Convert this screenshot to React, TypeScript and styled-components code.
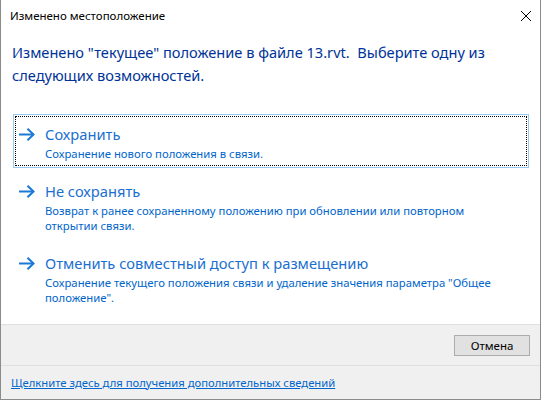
import React from "react";
import styled, { createGlobalStyle } from "styled-components";

const GlobalStyle = createGlobalStyle`
  html, body {
    margin: 0;
    padding: 0;
    background: #ffffff;
  }
  body {
    font-family: "Noto Sans", "Liberation Sans", sans-serif;
  }
`;

interface LinkOption {
  title: string;
  description: string;
  focused?: boolean;
}

const options: LinkOption[] = [
  {
    title: "Сохранить",
    description: "Сохранение нового положения в связи.",
    focused: true,
  },
  {
    title: "Не сохранять",
    description:
      "Возврат к ранее сохраненному положению при обновлении или повторном открытии связи.",
  },
  {
    title: "Отменить совместный доступ к размещению",
    description:
      'Сохранение текущего положения связи и удаление значения параметра "Общее положение".',
  },
];

const DialogWindow = styled.div`
  width: 541px;
  height: 400px;
  box-sizing: border-box;
  border: 1px solid #8c8c8c;
  border-top: none;
  display: flex;
  flex-direction: column;
  background: #ffffff;
  font-family: "Noto Sans", "Liberation Sans", sans-serif;
`;

const TitleBar = styled.div`
  height: 31px;
  flex: 0 0 auto;
  display: flex;
  align-items: center;
  justify-content: space-between;
  padding: 0 9px 1px 9px;
  font-size: 11.5px;
  color: #000000;
`;

const CloseButton = styled.div`
  width: 10px;
  height: 10px;
  color: #000000;
  display: flex;
`;

const Content = styled.div`
  flex: 1 1 auto;
  padding: 9px 10px 0 11px;
  display: flex;
  flex-direction: column;
`;

const MainInstruction = styled.div`
  font-size: 14.6px;
  line-height: 23px;
  color: #003399;
  margin-bottom: 27px;
`;

const LinkList = styled.div`
  display: flex;
  flex-direction: column;
  gap: 3px;
`;

const CommandLink = styled.div<{ $focused?: boolean }>`
  display: flex;
  align-items: flex-start;
  box-sizing: border-box;
  border: 1px solid ${(p) => (p.$focused ? "#99c9ef" : "transparent")};
  outline: ${(p) => (p.$focused ? "1px dotted #000000" : "none")};
  outline-offset: -3px;
  padding: 9px 20px 6px 5px;
  margin: 0 1px;
`;

const ArrowIcon = styled.div`
  width: 16px;
  height: 20px;
  flex: 0 0 auto;
  display: flex;
  align-items: center;
  margin-right: 10px;
  color: #1a78d6;
`;

const LinkText = styled.div`
  display: flex;
  flex-direction: column;
`;

const LinkTitle = styled.div`
  font-size: 14.7px;
  line-height: 20px;
  color: #1a6fd0;
  margin-bottom: 2px;
`;

const LinkDescription = styled.div`
  font-size: 11.3px;
  line-height: 15px;
  color: #0066cc;
`;

const Footer = styled.div`
  flex: 0 0 auto;
  background: #f0f0f0;
  border-top: 1px solid #dfdfdf;
  display: flex;
  flex-direction: column;
`;

const ButtonRow = styled.div`
  height: 40px;
  display: flex;
  align-items: center;
  justify-content: flex-end;
  padding-right: 10px;
  border-bottom: 1px solid #dfdfdf;
`;

const Button = styled.div`
  width: 76px;
  height: 21px;
  box-sizing: border-box;
  border: 1px solid #adadad;
  background: #e1e1e1;
  display: flex;
  align-items: center;
  justify-content: center;
  font-size: 11.5px;
  color: #000000;
`;

const FooterLinkRow = styled.div`
  height: 33px;
  display: flex;
  align-items: center;
  padding-left: 10px;
  padding-bottom: 1px;
  box-sizing: border-box;
`;

const FooterLink = styled.span`
  font-size: 11.25px;
  color: #0066cc;
  text-decoration: underline;
`;

function Arrow() {
  return (
    <svg width="16" height="13" viewBox="0 0 16 13" fill="none">
      <path d="M0 6.5 H14.5" stroke="currentColor" strokeWidth="2" />
      <path d="M8.5 0.7 L14.5 6.5 L8.5 12.3" stroke="currentColor" strokeWidth="2" />
    </svg>
  );
}

export default function App() {
  return (
    <>
      <GlobalStyle />
      <DialogWindow>
        <TitleBar>
          <span>Изменено местоположение</span>
          <CloseButton>
            <svg width="10" height="10" viewBox="0 0 10 10">
              <path d="M0 0 L10 10 M10 0 L0 10" stroke="currentColor" strokeWidth="1" />
            </svg>
          </CloseButton>
        </TitleBar>
        <Content>
          <MainInstruction>
            Изменено "текущее" положение в файле 13.rvt.&nbsp; Выберите одну из
            <br />
            следующих возможностей.
          </MainInstruction>
          <LinkList>
            {options.map((o) => (
              <CommandLink key={o.title} $focused={o.focused}>
                <ArrowIcon>
                  <Arrow />
                </ArrowIcon>
                <LinkText>
                  <LinkTitle>{o.title}</LinkTitle>
                  <LinkDescription>{o.description}</LinkDescription>
                </LinkText>
              </CommandLink>
            ))}
          </LinkList>
        </Content>
        <Footer>
          <ButtonRow>
            <Button>Отмена</Button>
          </ButtonRow>
          <FooterLinkRow>
            <FooterLink>Щелкните здесь для получения дополнительных сведений</FooterLink>
          </FooterLinkRow>
        </Footer>
      </DialogWindow>
    </>
  );
}
